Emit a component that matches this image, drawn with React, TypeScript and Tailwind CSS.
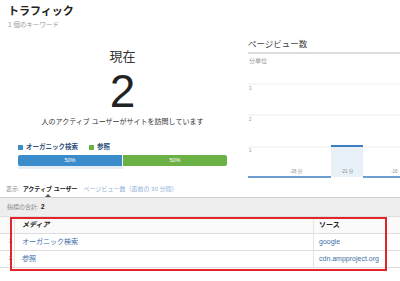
export default function App() {
  const rows = [
    { n: "1.", media: "オーガニック検索", source: "google" },
    { n: "2.", media: "参照", source: "cdn.ampproject.org" },
  ];

  return (
    <div
      className="relative w-[400px] h-[281px] overflow-hidden bg-white text-[#333]"
      style={{ fontFamily: '"Liberation Sans", "Noto Sans CJK JP", sans-serif' }}
    >
      {/* top: current users + chart */}
      <div className="flex h-[180px]">
        <div className="w-[235px] shrink-0">
          <div className="pl-2 pt-[4px] text-[11px] font-bold leading-[14px] text-[#222]">トラフィック</div>
          <div className="pl-2 mt-[2px] text-[6.5px] leading-[10px] text-[#999]">1 個のキーワード</div>
          <div className="pl-[18px] pr-[8px] flex flex-col items-center">
            <div className="mt-[19px] text-[13px] leading-[16px] text-[#333]">現在</div>
            <div className="mt-[3px] text-[46px] leading-[46px] font-light text-[#222]">2</div>
            <div className="mt-[3px] text-[7px] leading-[10px] text-[#333]">
              人のアクティブ ユーザーがサイトを訪問しています
            </div>
          </div>
          <div className="pl-[18px] pr-[8px]">
            <div className="mt-[15px] flex items-center gap-[3px] text-[6.5px] font-bold leading-[10px] text-[#2c4f7a]">
              <span className="w-[5px] h-[5px] bg-[#3a8ccb]" />
              <span>オーガニック検索</span>
              <span className="ml-[8px] w-[5px] h-[5px] bg-[#6bb145]" />
              <span>参照</span>
            </div>
            <div className="mt-[3px] flex h-[11px] rounded-[2px] overflow-hidden text-[5.5px] text-white">
              <div className="flex-1 bg-[#3a8ccb] flex items-center justify-center">50%</div>
              <div className="w-px bg-white" />
              <div className="flex-1 bg-[#6bb145] flex items-center justify-center">50%</div>
            </div>
            <div className="w-1/2 h-[3px] bg-[#e4eef7]" />
          </div>
        </div>

        <div className="flex-1 pl-[13px] pt-[38px]">
          <div className="text-[8.5px] leading-[12px] text-[#444]">ページビュー数</div>
          <div className="mt-[2px] h-[2px] bg-[#dcdcdc]" />
          <div className="mt-[3px] pl-[1px] text-[6px] leading-[8px] text-[#999]">分単位</div>
          <svg width="152" height="104" className="block mt-[11px]">
            <line x1="0" y1="8" x2="152" y2="8" stroke="#eeeeee" strokeWidth="1" />
            <line x1="0" y1="39" x2="152" y2="39" stroke="#eeeeee" strokeWidth="1" />
            <line x1="0" y1="71" x2="152" y2="71" stroke="#eeeeee" strokeWidth="1" />
            <text x="1" y="14" fontSize="4.5" fill="#999">3</text>
            <text x="1" y="45" fontSize="4.5" fill="#999">2</text>
            <text x="1" y="76" fontSize="4.5" fill="#999">1</text>
            <rect x="83" y="70" width="32" height="31" fill="#e8f1f8" />
            <rect x="83" y="69" width="32" height="2" fill="#3b7fc0" />
            <line x1="0" y1="101" x2="83" y2="101" stroke="#3b7fc0" strokeWidth="1.5" />
            <line x1="115" y1="101" x2="152" y2="101" stroke="#3b7fc0" strokeWidth="1.5" />
            <text x="42" y="97" fontSize="4.5" fill="#888">-26 分</text>
            <text x="93" y="97" fontSize="4.5" fill="#888">-21 分</text>
            <text x="143" y="97" fontSize="4.5" fill="#888">-16</text>
          </svg>
        </div>
      </div>

      {/* view switcher */}
      <div className="relative flex items-center h-[17px] pl-[6px] text-[6px] leading-[8px]">
        <span className="text-[#888]">表示:</span>
        <span className="ml-[3px] font-bold text-[#222]">アクティブ ユーザー</span>
        <span className="ml-[6px] text-[#8fb0d6]">ページビュー数（直前の 30 分間）</span>
        <span className="absolute left-[45px] bottom-0 w-0 h-0 border-l-[3px] border-r-[3px] border-b-[3px] border-l-transparent border-r-transparent border-b-[#555]" />
      </div>

      {/* totals */}
      <div className="h-[19px] border-t border-[#cfcfcf] bg-[#eeeeee] flex items-center pl-[7px] text-[6px]">
        <span className="text-[#888]">指標の合計:</span>
        <span className="ml-[2px] font-bold text-[#222] text-[7px]">2</span>
      </div>

      {/* table */}
      <div className="border-t border-[#dddddd] text-[7px]">
        <div className="flex h-[17px] border-b border-[#dddddd] bg-[#fafafa]">
          <div className="w-[15px] border-r border-[#e4e4e4]" />
          <div className="w-[298px] flex items-center pl-[7px] font-bold italic text-[#222]">メディア</div>
          <div className="flex-1 flex items-center pl-[5px] border-l border-[#e4e4e4] font-bold text-[#222]">ソース</div>
        </div>
        {rows.map((r) => (
          <div key={r.n} className="flex h-[17px] border-b border-[#dddddd]">
            <div className="w-[15px] border-r border-[#e4e4e4] flex items-center justify-end pr-[1px] text-[5px] text-[#888]">
              {r.n}
            </div>
            <div className="w-[298px] flex items-center pl-[7px] text-[#3d6fa8]">{r.media}</div>
            <div className="flex-1 flex items-center pl-[5px] border-l border-[#e4e4e4] text-[#3d6fa8]">{r.source}</div>
          </div>
        ))}
      </div>

      {/* annotation box */}
      <div className="absolute left-[10px] top-[217px] w-[377px] h-[54px] border-2 border-[#e3242b]" />
    </div>
  );
}
